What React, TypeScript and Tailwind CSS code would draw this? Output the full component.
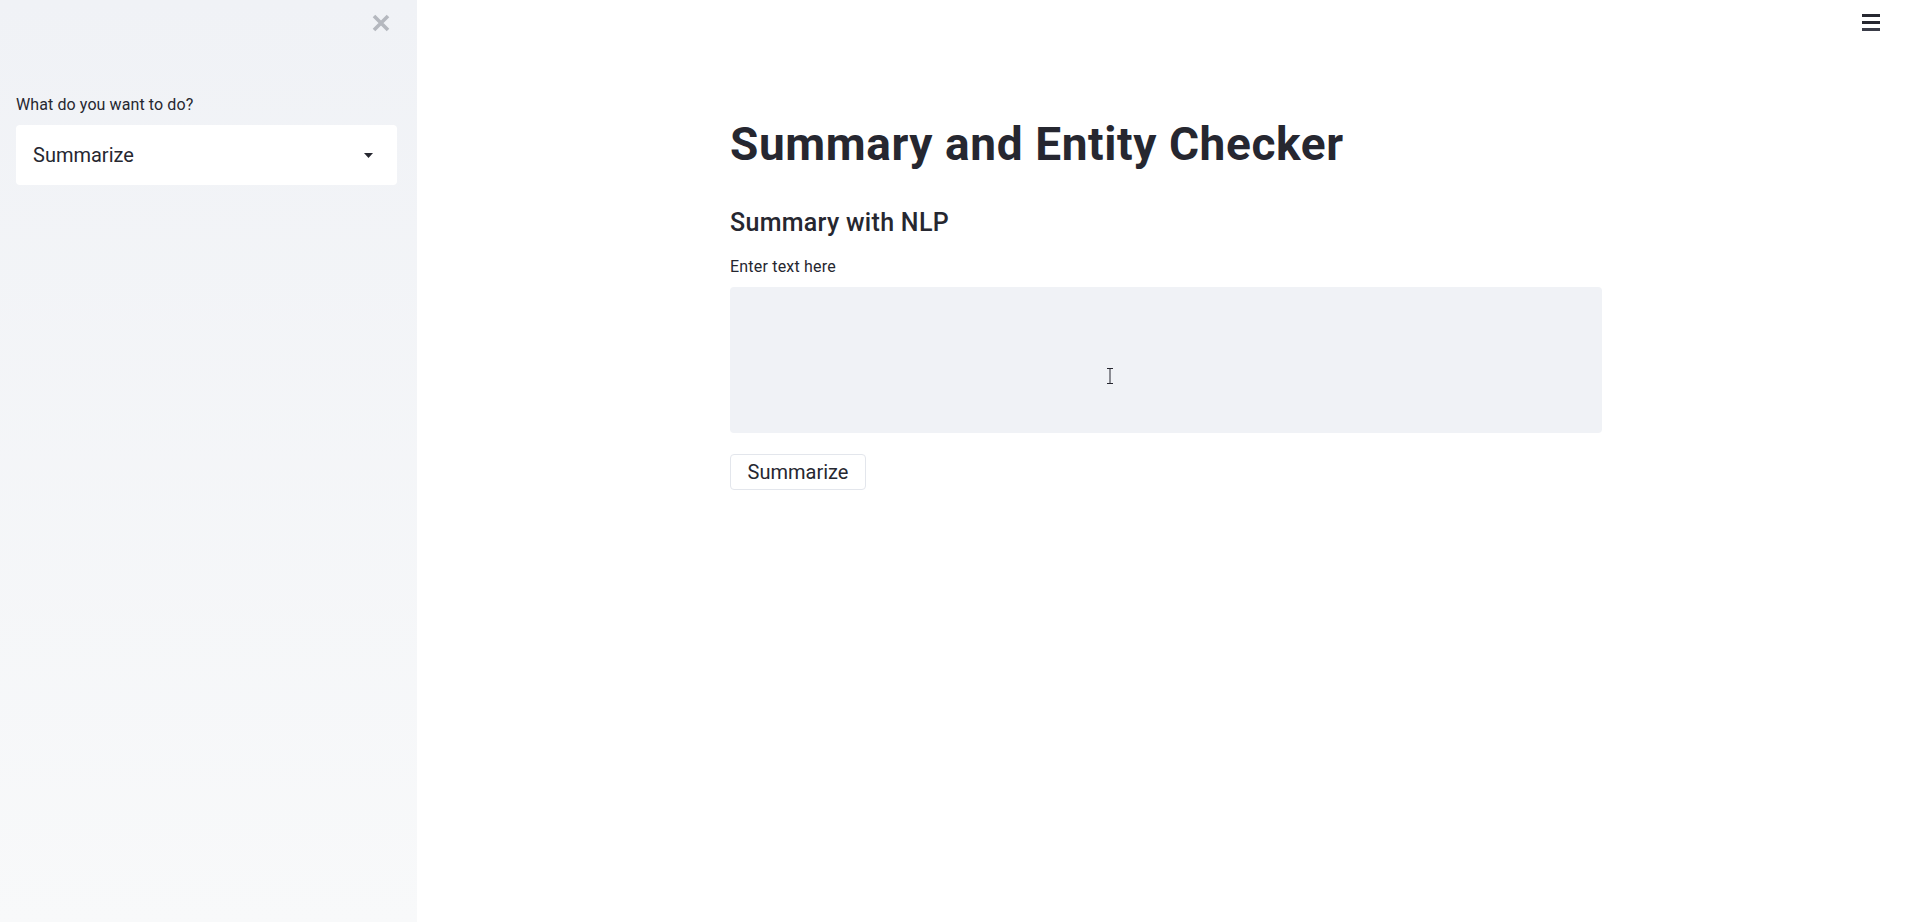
import React from "react";

const App = () => {
  return (
    <div
      className="flex h-[922px] w-full overflow-hidden bg-white text-[#262730]"
      style={{ fontFamily: "Roboto, 'Liberation Sans', sans-serif" }}
    >
      {/* sidebar */}
      <div className="relative flex w-[417px] shrink-0 flex-col bg-gradient-to-b from-[#f0f2f6] to-[#f8f9fa] px-4">
        <button className="absolute left-[371px] top-[13px] flex h-[20px] w-[20px] items-center justify-center">
          <svg width="20" height="20" viewBox="0 0 20 20">
            <path d="M3 3 L17 17 M17 3 L3 17" stroke="#b5b8bf" strokeWidth="3.6" strokeLinecap="butt" />
          </svg>
        </button>
        <div className="mt-[95px] text-[16px] leading-[20px] tracking-[0.1px]">What do you want to do?</div>
        <div className="mt-[10px] flex h-[60px] w-[381px] items-center justify-between rounded bg-white pl-[17px] pr-[24px]">
          <span className="text-[20px]">Summarize</span>
          <svg width="9" height="5" viewBox="0 0 9 5">
            <path d="M0 0 L9 0 L4.5 5 Z" fill="#262730" />
          </svg>
        </div>
      </div>

      {/* main */}
      <div className="relative flex-1">
        <button className="absolute right-[31px] top-[14px] flex w-[18px] flex-col gap-[4px]">
          <span className="block h-[3px] w-full bg-[#262730]" />
          <span className="block h-[3px] w-full bg-[#262730]" />
          <span className="block h-[3px] w-full bg-[#3a3c48]" />
        </button>

        <div className="ml-[313px] flex w-[872px] flex-col pt-[117px]">
          <h1 className="text-[46px] font-bold leading-[54px] tracking-[0.6px]">Summary and Entity Checker</h1>
          <h3 className="mt-[37px] text-[25px] font-medium leading-[30px] tracking-[0.3px]">Summary with NLP</h3>
          <label className="mt-[19px] text-[16px] leading-[20px] tracking-[0.2px]">Enter text here</label>
          <div className="relative mt-[10px] h-[146px] w-full rounded bg-[#f0f2f6]">
            <svg className="absolute left-[376px] top-[81px]" width="8" height="16" viewBox="0 0 8 16">
              <path d="M1 0.5 H7 M4 0.5 V15.5 M1 15.5 H7" stroke="#262730" strokeWidth="1" fill="none" />
            </svg>
          </div>
          <div className="mt-[21px]">
            <button className="h-[36px] w-[136px] rounded border border-[#e3e6ec] bg-white text-[20px] leading-[24px]">
              Summarize
            </button>
          </div>
        </div>
      </div>
    </div>
  );
};

export default App;
